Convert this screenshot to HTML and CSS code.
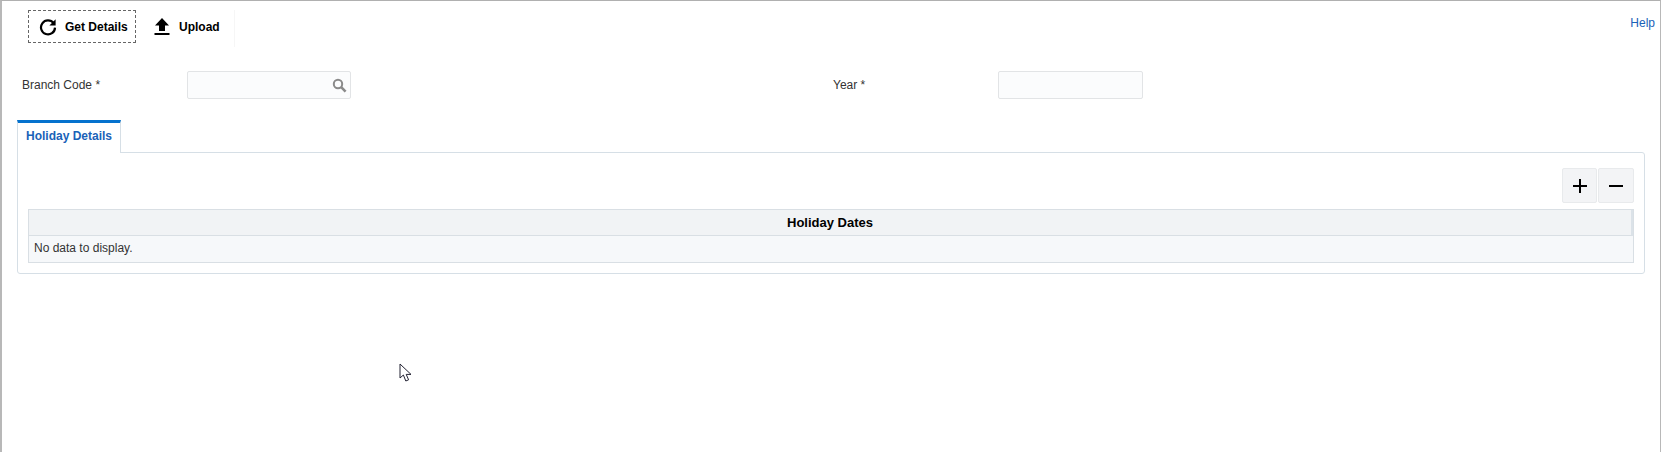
FILE: index.html
```html
<!DOCTYPE html>
<html lang="en">

<head>
    <meta charset="UTF-8">
    <title>Holiday Details</title>
    <link rel="stylesheet" href="styles.css">
</head>

<body>
    <div class="window">
        <div class="toolbar">
            <div class="actions">
                <button class="action action-focus">
                    <svg width="18" height="18" viewBox="0 0 18 18">
                        <path d="M14.6 5.2A7 7 0 1 0 16 9.6" fill="none" stroke="#000" stroke-width="2.2"/>
                        <path d="M16.6 1.2V7.4H10.4Z" fill="#000"/>
                    </svg>
                    <span>Get Details</span>
                </button>
                <button class="action">
                    <svg width="16" height="18" viewBox="0 0 16 18">
                        <path d="M8 0L15 7.5H11V13H5V7.5H1Z" fill="#000"/>
                        <rect x="0.5" y="15" width="15" height="2" fill="#000"/>
                    </svg>
                    <span>Upload</span>
                </button>
            </div>
            <a class="help" href="#">Help</a>
        </div>

        <div class="form">
            <div class="field field-branch">
                <label>Branch Code *</label>
                <div class="input input-branch">
                    <svg width="15" height="15" viewBox="0 0 15 15">
                        <circle cx="6" cy="6" r="4.2" fill="none" stroke="#8a8a8a" stroke-width="2"/>
                        <path d="M9.2 9.2L13.6 13.6" stroke="#8a8a8a" stroke-width="2.6"/>
                    </svg>
                </div>
            </div>
            <div class="field field-year">
                <label>Year *</label>
                <div class="input input-year"></div>
            </div>
        </div>

        <div class="tab">Holiday Details</div>
        <div class="panel">
            <div class="grid-buttons">
                <button class="grid-btn grid-btn-add">
                    <svg width="16" height="16" viewBox="0 0 16 16"><path d="M8 1V15M1 8H15" stroke="#000" stroke-width="2"/></svg>
                </button>
                <button class="grid-btn">
                    <svg width="16" height="16" viewBox="0 0 16 16"><path d="M1 8H15" stroke="#000" stroke-width="2"/></svg>
                </button>
            </div>
            <div class="table">
                <div class="table-head">Holiday Dates</div>
                <div class="table-row">No data to display.</div>
            </div>
        </div>

        <svg class="cursor" width="14" height="20" viewBox="0 0 14 20">
            <path d="M1 1V15L4.4 12L6.8 18L9.6 16.8L7.2 11.4H12Z" fill="#fff" stroke="#223" stroke-width="1"/>
        </svg>
    </div>
</body>

</html>
```

FILE: styles.css
```css
* {
    margin: 0;
    padding: 0;
    box-sizing: border-box;
    font-family: "Liberation Sans", Arial, sans-serif;
}

body {
    background-color: white;
    height: 452px;
    overflow: hidden;
}

.window {
    position: relative;
    width: 1661px;
    height: 452px;
    border-top: 1px solid #b0b0b0;
    border-left: 2px solid #b8b8b8;
    border-right: 1px solid #b8b8b8;
}

.toolbar {
    display: flex;
    justify-content: space-between;
    padding: 9px 5px 0 26px;
    height: 69px;
}

.actions {
    display: flex;
    height: 37px;
    border-right: 1px solid #f6f6f6;
    padding-right: 13px;
}

.action {
    display: flex;
    align-items: center;
    gap: 9px;
    height: 33px;
    border: 1px solid transparent;
    background: none;
    font-size: 12px;
    font-weight: bold;
    color: black;
}

.action-focus {
    width: 108px;
    padding-left: 10px;
    gap: 8px;
    border: 1px dashed #666;
    margin-right: 17px;
}

.help {
    color: #1a62b8;
    font-size: 12px;
    text-decoration: none;
    margin-top: 6px;
}

.form {
    display: flex;
    height: 50px;
    padding-top: 1px;
}

.field {
    display: flex;
    align-items: flex-start;
    color: #333;
    font-size: 12px;
}

.field label {
    line-height: 29px;
}

.field-branch {
    width: 831px;
    padding-left: 20px;
}

.field-branch label {
    width: 165px;
}

.field-year label {
    width: 165px;
}

.input {
    height: 28px;
    background-color: #fbfcfd;
    border: 1px solid #e2e4e6;
    border-radius: 2px;
}

.input-branch {
    display: flex;
    align-items: center;
    justify-content: flex-end;
    width: 164px;
    padding-right: 3px;
}

.input-year {
    width: 145px;
}

.tab {
    width: 104px;
    height: 33px;
    margin-left: 15px;
    position: relative;
    z-index: 1;
    background-color: white;
    border-top: 3px solid #0572ce;
    border-left: 1px solid #d6dfe6;
    border-right: 1px solid #d6dfe6;
    color: #1a62b8;
    font-size: 12px;
    font-weight: bold;
    line-height: 27px;
    text-align: center;
}

.panel {
    width: 1628px;
    height: 122px;
    margin: -1px 0 0 15px;
    padding: 15px 10px 0;
    border: 1px solid #d6dfe6;
    border-radius: 0 3px 3px 3px;
}

.grid-buttons {
    display: flex;
    justify-content: flex-end;
    gap: 1px;
    margin-bottom: 6px;
}

.grid-btn {
    display: flex;
    align-items: center;
    justify-content: center;
    width: 36px;
    height: 35px;
    background-color: #f3f4f6;
    border: 1px solid #e8eaec;
    border-radius: 2px;
}

.grid-btn-add {
    width: 35px;
}

.table {
    border: 1px solid #d9dfe4;
}

.table-head {
    height: 26px;
    background-color: #f1f3f5;
    border-bottom: 1px solid #d9dfe4;
    border-right: 2px solid #dbe2e8;
    color: black;
    font-size: 13px;
    font-weight: bold;
    line-height: 25px;
    text-align: center;
}

.table-row {
    height: 26px;
    padding-left: 5px;
    background-color: #f6f8fa;
    color: #333;
    font-size: 12px;
    line-height: 25px;
}

.cursor {
    position: absolute;
    left: 397px;
    top: 362px;
}
```
